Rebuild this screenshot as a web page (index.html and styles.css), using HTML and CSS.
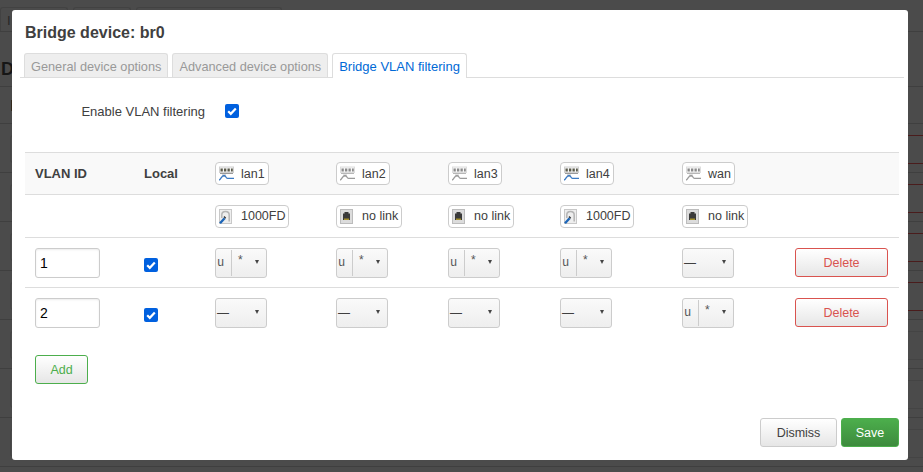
FILE: index.html
```html
<!DOCTYPE html>
<html lang="en">
<head>
<meta charset="utf-8">
<title>Bridge device: br0</title>
<link rel="stylesheet" href="styles.css">
</head>
<body>
<svg class="defs" width="0" height="0" aria-hidden="true">
  <defs>
    <symbol id="i-switch" viewBox="0 0 15 15">
      <rect x="0.500" y="1" width="14" height="5.500" fill="#f4f4f4" stroke="#d0d0d0" stroke-width="1"/>
      <path d="M1.500 2.500h2.300v3H1.500zM5 2.500h2.300v3H5zM8.500 2.500h2.300v3H8.500zM12 2.500h1.800v3H12z" fill="#5a5a4a"/>
      <path d="M1 7.500h13" stroke="#9a9a9a"/>
      <path d="M3 9h4M3.500 10.500h2.500" stroke="#bbb"/>
      <path d="M0 14c2-.5 2.500-4.500 5-4.500 2.300 0 1.500 2.800 3.500 2.800H15" fill="none" stroke="#3a7ac4" stroke-width="1.300"/>
    </symbol>
    <symbol id="i-plug" viewBox="0 0 13 15">
      <rect x="0.500" y="0.500" width="12" height="14" fill="#eee" stroke="#c8c8c8"/>
      <path d="M2.800 9V6c0-4.600 7.400-4.600 7.400 0v6.500" fill="none" stroke="#b4b4b4" stroke-width="1.500"/>
      <path d="M1 14.200l4.600-5" stroke="#1d66b8" stroke-width="2.400"/>
      <path d="M5 7.500l1.700 1.700" stroke="#333" stroke-width="1.300"/>
    </symbol>
    <symbol id="i-nolink" viewBox="0 0 13 15">
      <rect x="0.500" y="0.500" width="12" height="14" fill="#dcdcdc" stroke="#bcbcbc"/>
      <path d="M4.500 3h4v1.500H10V11H3V4.500h1.500z" fill="#3a3a3a"/>
      <path d="M4 9.500h5V11H4z" fill="#a38f2c"/>
    </symbol>
  </defs>
</svg>

<div class="page">
  <div class="page-tabs">
    <span class="page-tab"><span class="ghost-i">I</span></span>
    <span class="page-tab page-tab-b"></span>
    <span class="page-tab page-tab-c"></span>
  </div>
  <h2 class="page-heading">D</h2>
  <div class="page-sub"><span class="page-sub-mark"></span></div>
  <div class="bg-row"><span class="bg-input"></span><span class="bg-btn bg-red"></span></div>
  <div class="bg-row"><span class="bg-input"></span><span class="bg-btn bg-red"></span></div>
  <div class="bg-row"><span class="bg-input"></span><span class="bg-btn bg-red"></span></div>
  <div class="bg-row"><span class="bg-input"></span><span class="bg-btn bg-red"></span></div>
  <div class="bg-row"><span class="bg-input"></span><span class="bg-btn bg-gray"></span></div>
  <div class="bg-row"><span class="bg-input"></span><span class="bg-btn bg-gray"></span></div>
  <div class="bg-row"><span class="bg-input"></span><span class="bg-btn bg-gray"></span></div>
</div>

<div class="modal">
  <h4 class="title">Bridge device: br0</h4>
  <ul class="tabs">
    <li class="tab">General device options</li>
    <li class="tab">Advanced device options</li>
    <li class="tab tab-active">Bridge VLAN filtering</li>
  </ul>

  <div class="option">
    <label class="option-label">Enable VLAN filtering</label>
    <span class="check"><svg viewBox="0 0 14 14"><path d="M3.200 7.200l2.600 2.600 5-5.300" fill="none" stroke="#fff" stroke-width="2.200"/></svg></span>
  </div>

  <div class="vlan-table">
    <div class="vrow vrow-head">
      <div class="cell th">VLAN ID</div>
      <div class="cell th">Local</div>
      <div class="cell"><span class="badge"><svg class="ico-switch"><use href="#i-switch"/></svg>lan1</span></div>
      <div class="cell"><span class="badge"><svg class="ico-switch ico-off"><use href="#i-switch"/></svg>lan2</span></div>
      <div class="cell"><span class="badge"><svg class="ico-switch ico-off"><use href="#i-switch"/></svg>lan3</span></div>
      <div class="cell"><span class="badge"><svg class="ico-switch"><use href="#i-switch"/></svg>lan4</span></div>
      <div class="cell"><span class="badge"><svg class="ico-switch ico-off"><use href="#i-switch"/></svg>wan</span></div>
      <div class="cell"></div>
    </div>
    <div class="vrow vrow-status">
      <div class="cell"></div>
      <div class="cell"></div>
      <div class="cell"><span class="badge"><svg class="ico-port"><use href="#i-plug"/></svg>1000FD</span></div>
      <div class="cell"><span class="badge"><svg class="ico-port"><use href="#i-nolink"/></svg>no link</span></div>
      <div class="cell"><span class="badge"><svg class="ico-port"><use href="#i-nolink"/></svg>no link</span></div>
      <div class="cell"><span class="badge"><svg class="ico-port"><use href="#i-plug"/></svg>1000FD</span></div>
      <div class="cell"><span class="badge"><svg class="ico-port"><use href="#i-nolink"/></svg>no link</span></div>
      <div class="cell"></div>
    </div>
    <div class="vrow vrow-data">
      <div class="cell"><input class="vid" type="text" value="1"></div>
      <div class="cell cell-check"><span class="check"><svg viewBox="0 0 14 14"><path d="M3.200 7.200l2.600 2.600 5-5.300" fill="none" stroke="#fff" stroke-width="2.200"/></svg></span></div>
      <div class="cell"><span class="drop"><span class="drop-u">u</span><span class="drop-star">*</span><span class="arrow"></span></span></div>
      <div class="cell"><span class="drop"><span class="drop-u">u</span><span class="drop-star">*</span><span class="arrow"></span></span></div>
      <div class="cell"><span class="drop"><span class="drop-u">u</span><span class="drop-star">*</span><span class="arrow"></span></span></div>
      <div class="cell"><span class="drop"><span class="drop-u">u</span><span class="drop-star">*</span><span class="arrow"></span></span></div>
      <div class="cell"><span class="drop"><span class="drop-dash">—</span><span class="arrow"></span></span></div>
      <div class="cell"><button class="btn btn-del" type="button">Delete</button></div>
    </div>
    <div class="vrow vrow-data">
      <div class="cell"><input class="vid" type="text" value="2"></div>
      <div class="cell cell-check"><span class="check"><svg viewBox="0 0 14 14"><path d="M3.200 7.200l2.600 2.600 5-5.300" fill="none" stroke="#fff" stroke-width="2.200"/></svg></span></div>
      <div class="cell"><span class="drop"><span class="drop-dash">—</span><span class="arrow"></span></span></div>
      <div class="cell"><span class="drop"><span class="drop-dash">—</span><span class="arrow"></span></span></div>
      <div class="cell"><span class="drop"><span class="drop-dash">—</span><span class="arrow"></span></span></div>
      <div class="cell"><span class="drop"><span class="drop-dash">—</span><span class="arrow"></span></span></div>
      <div class="cell"><span class="drop"><span class="drop-u">u</span><span class="drop-star">*</span><span class="arrow"></span></span></div>
      <div class="cell"><button class="btn btn-del" type="button">Delete</button></div>
    </div>
  </div>

  <div class="add-wrap"><button class="btn btn-add" type="button">Add</button></div>

  <div class="actions">
    <button class="btn btn-dismiss" type="button">Dismiss</button>
    <button class="btn btn-save" type="button">Save</button>
  </div>
</div>
</body>
</html>
```
FILE: styles.css
```css
* { box-sizing: border-box; }
html, body { margin: 0; height: 100%; }
body {
  width: 923px;
  height: 472px;
  overflow: hidden;
  position: relative;
  background: #4b4b4b;
  font-family: "Liberation Sans", Arial, sans-serif;
  font-size: 13px;
  color: #404040;
}
.defs { position: absolute; }

/* dimmed page behind the dialog */
.page { display: flex; flex-direction: column; height: 472px; }
.page-tabs {
  display: flex;
  gap: 5px;
  height: 32px;
  padding-top: 7px;
  border-bottom: 1px solid #3f3f3f;
}
.page-tab {
  width: 68px;
  height: 24px;
  border: 1px solid #424242;
  border-bottom: 0;
  border-radius: 3px 3px 0 0;
  padding: 6px 0 0 6px;
  font-size: 13px;
  line-height: 14px;
  color: #262626;
}
.page-tab-b { width: 58px; }
.page-tab-c { width: 146px; }
.page-heading {
  margin: 0;
  height: 55px;
  padding: 27px 0 0 1px;
  font-size: 18px;
  line-height: 20px;
  color: #161616;
  border-bottom: 1px solid #3f3f3f;
}
.page-sub { height: 37px; padding-top: 13px; border-bottom: 1px solid #3f3f3f; }
.page-sub-mark { display: block; width: 12px; height: 11px; border-right: 1px solid #33291c; }
.bg-row {
  flex: none;
  height: 49px;
  display: flex;
  justify-content: space-between;
  padding-top: 11px;
  border-bottom: 1px solid #3f3f3f;
}
.bg-input {
  width: 30px;
  height: 28px;
  margin-left: 10px;
  border: 1px solid #444;
  border-radius: 3px;
}
.bg-btn { width: 40px; height: 29px; margin-right: -20px; border: 1px solid #444; border-radius: 3px; }
.bg-red { border-color: #4a1c1c; }

/* dialog */
.modal {
  position: absolute;
  left: 12px;
  top: 10px;
  width: 896px;
  height: 450px;
  background: #fff;
  border-radius: 3px;
  padding: 14px 9px 13px 13px;
  display: flex;
  flex-direction: column;
  will-change: opacity;
}
.title {
  margin: 0;
  height: 29px;
  font-size: 16px;
  line-height: 18px;
  font-weight: bold;
}
.tabs {
  display: flex;
  list-style: none;
  margin: 0 -5px;
  padding: 0 0 0 4px;
  gap: 4px;
  height: 25px;
  border-bottom: 1px solid #ddd;
}
.tab {
  height: 24px;
  padding: 0 6px;
  line-height: 25px;
  font-size: 12.750px;
  white-space: nowrap;
  background: #eee;
  border: 1px solid #ddd;
  border-bottom: 0;
  border-radius: 3px 3px 0 0;
  color: #999;
}
.tab-active {
  height: 25px;
  font-size: 13px;
  background: #fff;
  color: #0069d6;
}
.option {
  display: flex;
  align-items: center;
  height: 74px;
  padding-bottom: 8px;
}
.option-label { width: 180px; text-align: right; margin-right: 20px; }
.check {
  display: block;
  width: 14px;
  height: 14px;
  border-radius: 2px;
  background: #0060df;
}
.check svg { display: block; width: 14px; height: 14px; }
.vlan-table { border-top: 1px solid #ddd; }
.vrow {
  display: grid;
  grid-template-columns: 109px 71px 121px 112px 112px 122px 113px 114px;
  align-items: center;
  border-bottom: 1px solid #ddd;
}
.vrow-head { height: 42px; background: #f9f9f9; }
.vrow-status { height: 43px; }
.vrow-data { height: 50px; }
.vrow-data:last-child { border-bottom-color: transparent; }
.cell { padding-left: 10px; }
.cell-check { padding-top: 5px; }
.th { font-weight: bold; }
.badge {
  display: inline-flex;
  align-items: center;
  height: 23px;
  padding: 0 3px;
  border: 1px solid #ccc;
  border-radius: 4px;
  background: #fff;
  font-size: 12.500px;
  white-space: nowrap;
}
.ico-switch { flex: none; width: 15px; height: 15px; margin-right: 7px; }
.ico-off { opacity: .7; filter: grayscale(1); }
.ico-port { flex: none; width: 13px; height: 15px; margin-right: 9px; }
.drop {
  display: flex;
  align-items: center;
  position: relative;
  width: 52px;
  height: 30px;
  border: 1px solid #ccc;
  border-radius: 3px;
  background: linear-gradient(#fafafa, #eee);
}
.drop-u {
  width: 16px;
  height: 26px;
  line-height: 26px;
  padding-left: 1px;
  border-right: 1px solid #ccc;
  font-family: "Liberation Mono", monospace;
  font-size: 12px;
  color: #555;
}
.drop-star { padding-left: 6px; font-size: 12px; line-height: 12px; margin-top: -6px; color: #555; }
.drop-dash { padding-left: 1px; font-size: 12px; }
.arrow {
  position: absolute;
  left: 39px;
  top: 11px;
  border-left: 2.500px solid transparent;
  border-right: 2.500px solid transparent;
  border-top: 4px solid #444;
}
.vid {
  display: block;
  width: 65px;
  height: 30px;
  padding: 0 4px;
  border: 1px solid #ccc;
  border-radius: 3px;
  box-shadow: inset 0 1px 2px rgba(0,0,0,.08);
  font: 14px "Liberation Sans", Arial, sans-serif;
  color: #000;
}
.btn {
  display: block;
  height: 29px;
  padding: 0;
  border: 1px solid #ccc;
  border-radius: 3px;
  background: linear-gradient(#fff, #e6e6e6);
  font: 12.500px "Liberation Sans", Arial, sans-serif;
  color: #404040;
}
.vrow .btn-del { width: 93px; border: 1px solid #d9534f; color: #d9534f; }
.add-wrap { padding: 17px 0 0 10px; }
.add-wrap .btn-add { width: 53px; border: 1px solid #4cae4c; color: #4cae4c; }
.actions { margin-top: auto; display: flex; justify-content: flex-end; gap: 4px; }
.btn-dismiss { width: 77px; }
.btn-save { width: 58px; border-color: #4cae4c; background: linear-gradient(#4cae4c, #3d8b3d); color: #fff; }
```
